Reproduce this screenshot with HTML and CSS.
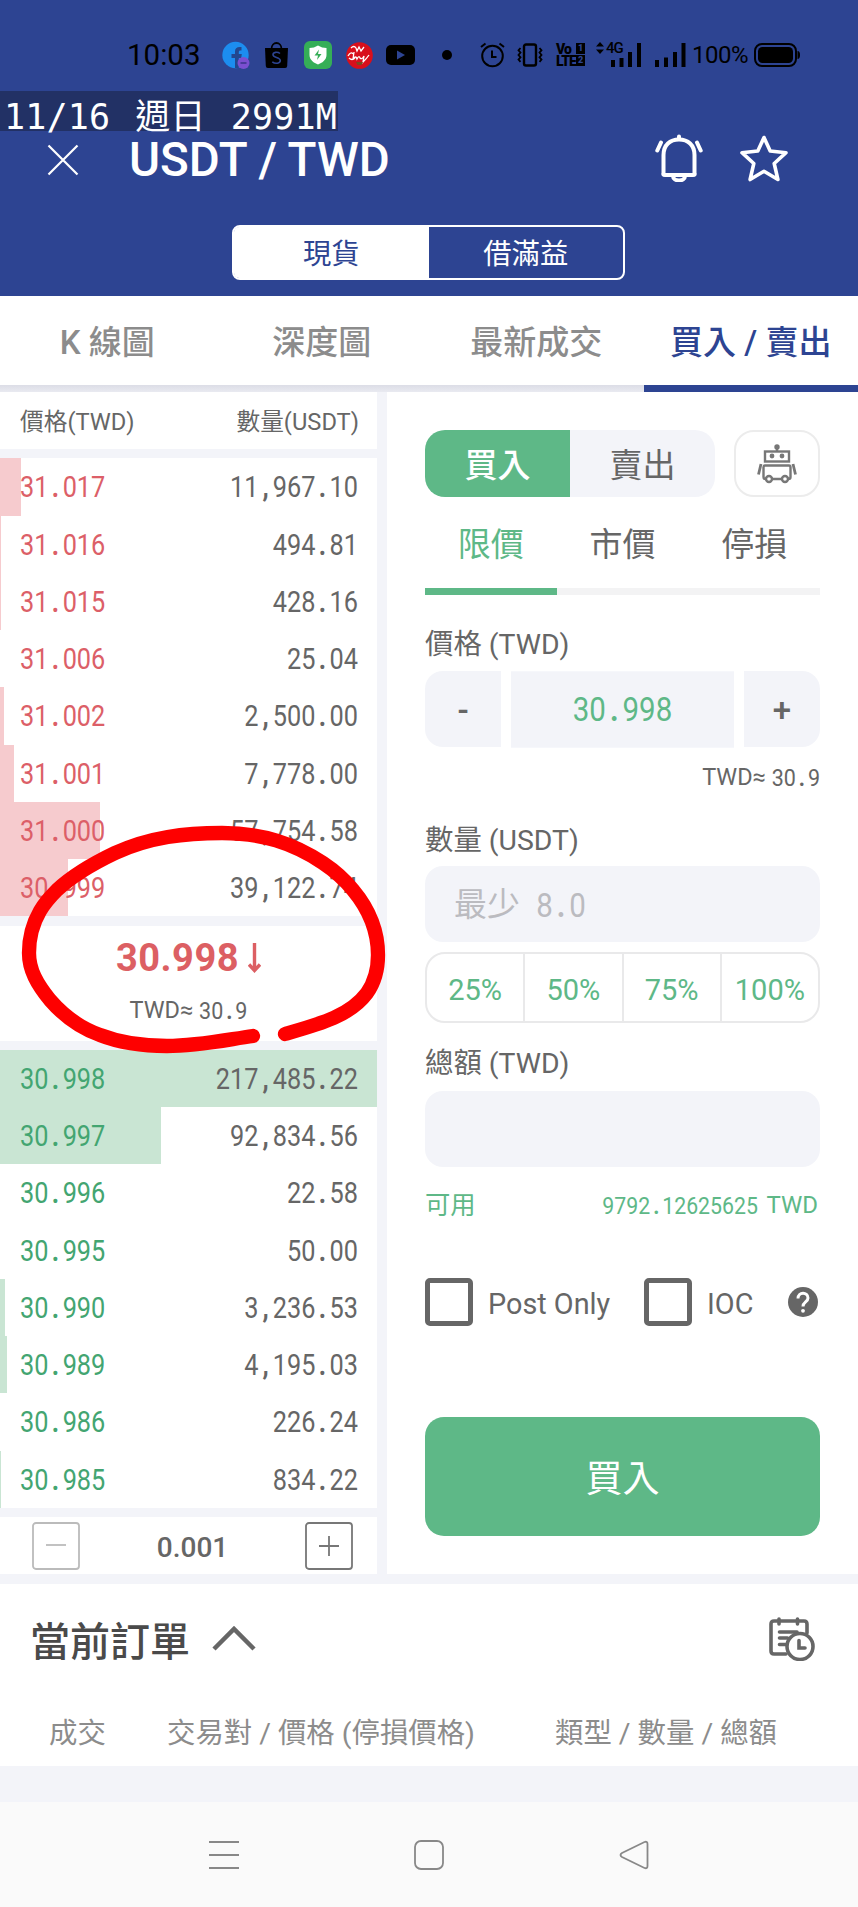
FILE: index.html
```html
<!DOCTYPE html>
<html lang="zh-Hant">
<head>
    <meta charset="UTF-8">
    <title>USDT / TWD</title>
    <link rel="stylesheet" href="styles.css">
</head>
<body>
    <div class="header">
        <div class="status-bar">
            <span class="clock">10:03</span>
            <svg class="ic-fb" width="28" height="29" viewBox="0 0 28 29">
                <circle cx="13.5" cy="14" r="13.2" fill="#1c8df0"/>
                <path d="M13 27V17H9.500v-4H13v-2.500C13 7 15 5.500 19.500 6v3.500c-2-.2-2.700.2-2.700 1.700V13h3l-.6 4h-2.400v10z" fill="#23478f"/>
                <circle cx="21.500" cy="22" r="6" fill="#7b4fd0"/>
                <path d="M18.500 22h6" stroke="#4a3a9c" stroke-width="2"/>
            </svg>
            <svg class="ic-bag" width="23" height="26" viewBox="0 0 23 26">
                <path d="M0 6h23l-.8 18q-.1 2-2 2H2.800q-1.900 0-2-2z" fill="#000"/>
                <path d="M6.500 7C6.500-1 16.500-1 16.500 7" fill="none" stroke="#000" stroke-width="1.800"/>
                <path d="M15 11.500c-2.500-2-7-1.500-7 1.300 0 3.200 7.300 2.200 7.300 5.700 0 3-5 3.700-8 1.300" fill="none" stroke="#2d4492" stroke-width="1.600"/>
            </svg>
            <svg class="ic-shield" width="28" height="28" viewBox="0 0 28 28">
                <rect width="28" height="28" rx="6" fill="#35ae57"/>
                <path d="M14 4.500q4 2.500 8.500 2.500v7c0 5-4.500 8-8.500 9.500C10 22 5.500 19 5.500 14V7Q10 7 14 4.500z" fill="#fff"/>
                <path d="M15 8.500l-4.500 6H14L13 19l4.500-6H14z" fill="#35ae57"/>
            </svg>
            <svg class="ic-red" width="27" height="27" viewBox="0 0 27 27">
                <circle cx="13.500" cy="13.500" r="13.300" fill="#d80f1c"/>
                <path d="M5 6q3-3 5 0l1 3 2-4 2 4 3-4M2 14q3-5 5-2M8 10l-1 7q3-4 4 0 2-4 3-1 2 2 4-2l-1 6q4-4 6-7M3 16q3 3 6 0" fill="none" stroke="#fff" stroke-width="1.300"/>
                <path d="M10 20h7l-1.500 3h-4z" fill="#7a4a1e"/>
            </svg>
            <svg class="ic-yt" width="29" height="20" viewBox="0 0 29 20">
                <rect width="29" height="20" rx="5" fill="#000"/>
                <path d="M11 5.500l8 4.500-8 4.500z" fill="#2d4492"/>
            </svg>
            <span class="dot"></span>
            <svg class="ic-alarm" width="25" height="26" viewBox="0 0 25 26">
                <circle cx="12.500" cy="14" r="10.300" fill="none" stroke="#000" stroke-width="2"/>
                <path d="M12 8.500V15h4.500M1 5l4.500-3.500M24 5l-4.500-3.500" fill="none" stroke="#000" stroke-width="2"/>
            </svg>
            <svg class="ic-vib" width="26" height="24" viewBox="0 0 26 24">
                <rect x="7" y="1.500" width="12" height="21" rx="2" fill="none" stroke="#000" stroke-width="2.400"/>
                <path d="M3.500 5l-2 2.300 2 2.300-2 2.400 2 2.300-2 2.300 2 2.300M22.500 5l2 2.300-2 2.300 2 2.400-2 2.300 2 2.300-2 2.300" fill="none" stroke="#000" stroke-width="1.800"/>
            </svg>
            <span class="volte"><span>Vo<b>1</b></span><span>LTE<b>2</b></span></span>
            <span class="net">
                <svg width="8" height="12" viewBox="0 0 8 12"><path d="M0 4.500L4 0l4 4.500zM0 7.500L4 12l4-4.500z" fill="#000"/></svg>
                <span>4G</span>
            </span>
            <svg class="ic-sig1" width="30" height="24" viewBox="0 0 30 24"><path d="M0 17h4v7H0zM8.500 15h4v9h-4zM17 9h4v15h-4zM26 0h4v24h-4z" fill="#000"/></svg>
            <svg class="ic-sig2" width="31" height="24" viewBox="0 0 31 24"><path d="M0 17h4v7H0zM9 14.500h4V24H9zM18 9h4v15h-4zM26.500 0h4v24h-4z" fill="#000"/></svg>
            <span class="percent">100%</span>
            <svg class="ic-bat" width="46" height="24" viewBox="0 0 46 24">
                <rect x="1" y="1" width="41" height="22" rx="7" fill="none" stroke="#000" stroke-width="2"/>
                <rect x="4" y="4" width="35" height="16" rx="4.500" fill="#000"/>
                <path d="M43.500 8q2.500 0 2.500 4t-2.500 4z" fill="#000"/>
            </svg>
        </div>
        <div class="memory-note">11/16 週日 2991M</div>
        <div class="title-row">
            <svg class="close" width="32" height="32" viewBox="0 0 32 32"><path d="M1.500 1.500l29 29M30.500 1.500l-29 29" stroke="#fff" stroke-width="2.200"/></svg>
            <h1>USDT / TWD</h1>
            <svg class="bell" width="48" height="48" viewBox="0 0 48 48" fill="none" stroke="#fff" stroke-width="4" stroke-linecap="round" stroke-linejoin="round">
                <path d="M8.500 39V21C8.500 11 15 5.500 24 5.500S39.500 11 39.500 21v18q1 2-1.500 2H10q-2.500 0-1.500-2z"/>
                <path d="M24 2.500v2M18 42c0 6 12 6 12 0" />
                <path d="M6 8.500L2.300 16.500M42 8.500l3.700 8"/>
            </svg>
            <svg class="star" width="50" height="48" viewBox="0 0 50 48" fill="none" stroke="#fff" stroke-width="3.600" stroke-linejoin="round">
                <path d="M25 3.500L31.200 17 47 18.700 35.200 29.500 38.900 45.500 25 37.200 11.100 45.500 14.800 29.500 3 18.700 18.800 17z"/>
            </svg>
        </div>
        <div class="segment">
            <span class="active">現貨</span>
            <span>借滿益</span>
        </div>
    </div>

    <div class="tabs">
        <span>K 線圖</span>
        <span>深度圖</span>
        <span>最新成交</span>
        <span class="active">買入 / 賣出</span>
    </div>

    <div class="main">
        <div class="book">
            <div class="book-head"><span>價格(TWD)</span><span>數量(USDT)</span></div>
            <div class="rows asks" id="asks"></div>
            <div class="last">
                <div class="last-price">30.998
                    <svg width="13" height="30" viewBox="0 0 13 30"><path d="M6.500 0v27M1 21.500l5.500 6 5.500-6" fill="none" stroke="#dc5f63" stroke-width="3.400"/></svg>
                </div>
                <div class="approx">TWD≈ <span class="num">30.9</span></div>
            </div>
            <div class="rows bids" id="bids"></div>
            <div class="step">
                <svg class="off" width="48" height="48" viewBox="0 0 48 48"><rect x="1" y="1" width="46" height="46" rx="3"/><path d="M14 23h20"/></svg>
                <span>0.001</span>
                <svg width="48" height="48" viewBox="0 0 48 48"><rect x="1" y="1" width="46" height="46" rx="3"/><path d="M14 24h20M24 14v20"/></svg>
            </div>
        </div>

        <div class="order-form">
            <div class="side-row">
                <span class="side buy">買入</span>
                <span class="side sell">賣出</span>
                <span class="bot">
                    <svg width="40" height="40" viewBox="0 0 40 40" fill="none" stroke="#777" stroke-width="2.400">
                        <circle cx="20" cy="3" r="1.500" fill="#777"/>
                        <path d="M20 4v4"/>
                        <rect x="8" y="7.500" width="24" height="10"/>
                        <circle cx="15" cy="12" r="1.200" fill="#777"/>
                        <circle cx="25" cy="12" r="1.200" fill="#777"/>
                        <path d="M8 21.500h24q1.500 0 1.500 2V33q0 2-2 2h-23q-2 0-2-2v-9.500q0-2 1.500-2z"/>
                        <circle cx="12" cy="35" r="3" fill="#fff"/>
                        <circle cx="28" cy="35" r="3" fill="#fff"/>
                        <path d="M4 20L1.500 30.500M36 20l2.500 10.500" stroke-width="2.800"/>
                    </svg>
                </span>
            </div>
            <div class="type-tabs">
                <span class="active">限價</span>
                <span>市價</span>
                <span>停損</span>
            </div>
            <div class="label label-price">價格 (TWD)</div>
            <div class="price-row">
                <span class="pm minus">-</span>
                <span class="price num">30.998</span>
                <span class="pm plus">+</span>
            </div>
            <div class="approx approx-right">TWD≈ <span class="num">30.9</span></div>
            <div class="label label-amount">數量 (USDT)</div>
            <div class="field">最少 <span class="num">8.0</span></div>
            <div class="percents"><span>25%</span><span>50%</span><span>75%</span><span>100%</span></div>
            <div class="label label-total">總額 (TWD)</div>
            <div class="field"></div>
            <div class="available"><span>可用</span><span class="balance"><span class="num">9792.12625625</span> TWD</span></div>
            <div class="checks">
                <span class="box"></span><span class="post-only">Post Only</span>
                <span class="box"></span><span class="ioc">IOC</span>
                <svg class="help" width="30" height="30" viewBox="0 0 30 30">
                    <circle cx="15" cy="15" r="15" fill="#666"/>
                    <path d="M10 11.500C10 4.500 20 4.500 20 11c0 4-5 4-5 8.500" fill="none" stroke="#fff" stroke-width="3"/>
                    <circle cx="15" cy="23.800" r="1.900" fill="#fff"/>
                </svg>
            </div>
            <div class="submit">買入</div>
        </div>

        <!-- hand drawn mark around the last price -->
        <svg class="mark" width="400" height="250" viewBox="0 815 400 250">
            <path d="M253 1036C225 1040 197 1046 167 1046C140 1046 118 1042 100 1035C80 1028 63 1015 50 1000C37 984 29 970 29 953C29 937 33 923 40 911C44 904 50 897 57 890C72 876 92 864 115 853C150 837 185 833 222 833C262 833 293 843 323 863C335 871 345 880 353 890C368 908 378 930 378 955C378 970 374 983 367 993C350 1016 320 1024 285 1034"/>
        </svg>
    </div>

    <div class="orders">
        <div class="orders-title">
            <h2>當前訂單</h2>
            <svg width="44" height="26" viewBox="0 0 44 26"><path d="M2 24L22 4l20 20" fill="none" stroke="#666" stroke-width="4.500"/></svg>
            <svg class="history" width="46" height="44" viewBox="0 0 46 44" fill="none" stroke="#666" stroke-width="3.600" stroke-linecap="round">
                <path d="M38 16V7q0-3-3-3H5Q2 4 2 7v27q0 3 3 3h12"/>
                <path d="M10 2v5M28.500 2v5M10.500 15H28M10.500 21h8M10.500 27.500h6"/>
                <circle cx="31" cy="29.500" r="13" fill="#fff"/>
                <path d="M30 23.500V31h6"/>
            </svg>
        </div>
        <div class="orders-head">
            <span>成交</span>
            <span>交易對 / 價格 (停損價格)</span>
            <span>類型 / 數量 / 總額</span>
        </div>
    </div>

    <div class="nav">
        <svg width="30" height="30" viewBox="0 0 30 30"><path d="M0 2h30M0 15h30M0 28h30"/></svg>
        <svg width="30" height="30" viewBox="0 0 30 30"><rect x="1" y="1" width="28" height="28" rx="6"/></svg>
        <svg width="30" height="30" viewBox="0 0 30 30"><path d="M25.500 2Q28.500 1 28.500 4v22q0 3-3 2L3 17q-3-2 0-4z"/></svg>
    </div>

    <script>
    // price, amount, depth bar width in px
    const asks = [
        ['31.017', '11,967.10', 21],
        ['31.016', '494.81', 1],
        ['31.015', '428.16', 1],
        ['31.006', '25.04', 0],
        ['31.002', '2,500.00', 4],
        ['31.001', '7,778.00', 14],
        ['31.000', '57,754.58', 100],
        ['30.999', '39,122.74', 68]
    ];
    const bids = [
        ['30.998', '217,485.22', 377],
        ['30.997', '92,834.56', 161],
        ['30.996', '22.58', 0],
        ['30.995', '50.00', 0],
        ['30.990', '3,236.53', 5],
        ['30.989', '4,195.03', 7],
        ['30.986', '226.24', 0],
        ['30.985', '834.22', 1]
    ];

    function renderRows(id, rows) {
        document.getElementById(id).innerHTML = rows.map(row => `<div class="row">
            <div class="bar" style="width: ${row[2]}px"></div>
            <span class="num row-price">${row[0]}</span><span class="num">${row[1]}</span>
        </div>`).join('');
    }
    renderRows('asks', asks);
    renderRows('bids', bids);

    // give dots and commas the same width as the digits
    document.querySelectorAll('.num').forEach(el => {
        el.innerHTML = el.textContent.replace(/[.,]/g, '<i>$&</i>');
    });
    </script>
</body>
</html>
```

FILE: styles.css
```css
* {
    box-sizing: border-box;
}
body {
    margin: 0;
    width: 858px;
    height: 1907px;
    overflow: hidden;
    background-color: #f3f4f9;
    color: #666;
    font-family: Roboto, "Noto Sans CJK TC", sans-serif;
}
svg {
    display: block;
    flex: none;
}
h1, h2 {
    margin: 0;
    font-weight: 500;
}

/* Header */
.header {
    position: relative;
    height: 296px;
    background-color: #2d4492;
}
.status-bar {
    display: flex;
    align-items: center;
    height: 91px;
    padding: 19px 0 0 127px;
    color: #000;
}
.clock {
    width: 95px;
    font-size: 29.500px;
}
.ic-bag { margin-left: 15px; }
.ic-shield { margin-left: 16px; }
.ic-red { margin-left: 14px; }
.ic-yt { margin-left: 13px; }
.dot {
    width: 10px;
    height: 10px;
    margin-left: 27px;
    border-radius: 50%;
    background-color: #000;
}
.ic-alarm { margin-left: 28px; }
.ic-vib { margin-left: 12px; }
.volte {
    display: flex;
    flex-direction: column;
    width: 29px;
    margin-left: 13px;
    font-size: 14px;
    font-weight: 900;
    line-height: 12px;
}
.volte span {
    display: flex;
    justify-content: space-between;
    letter-spacing: -1px;
}
.volte b {
    width: 9px;
    height: 11px;
    background-color: #000;
    color: #2d4492;
    font-size: 9px;
    line-height: 11px;
    text-align: center;
    letter-spacing: 0;
}
.net {
    display: flex;
    gap: 2px;
    width: 28px;
    height: 26px;
    margin-left: 11px;
    align-items: flex-start;
    font-size: 15px;
    font-weight: 500;
    line-height: 13px;
    letter-spacing: -1px;
}
.ic-sig1 { margin-left: -13px; }
.ic-sig2 { margin-left: 14px; }
.percent {
    width: 62px;
    margin-left: 6px;
    font-size: 24px;
    letter-spacing: -.5px;
}
.memory-note {
    position: absolute;
    left: 0;
    top: 91px;
    width: 338px;
    height: 54px;
    padding-left: 4px;
    background: linear-gradient(#223165, #223165) no-repeat 0 0 / 100% 40px;
    color: #fff;
    font-family: "DejaVu Sans Mono", "Noto Sans CJK TC", monospace;
    font-size: 35px;
    line-height: 53px;
    letter-spacing: .15px;
    word-spacing: 4px;
    white-space: pre;
}
.title-row {
    display: flex;
    align-items: center;
    height: 134px;
    padding: 3px 69px 0 47px;
}
.title-row h1 {
    margin: 1px 0 0 50px;
    color: #fff;
    font-size: 47.500px;
    line-height: 56px;
    white-space: nowrap;
}
.bell { margin: 0 0 3px auto; }
.star { margin: 0 0 3px 36px; }
.segment {
    display: flex;
    width: 393px;
    height: 55px;
    margin: 0 0 0 232px;
    border: 2px solid #fff;
    border-radius: 8px;
    color: #fff;
    font-size: 28.300px;
    line-height: 55px;
    text-align: center;
}
.segment span {
    flex: 1;
}
.segment .active {
    background-color: #fff;
    color: #2d4492;
    border-radius: 5px 0 0 5px;
}

/* Chart tabs */
.tabs {
    position: relative;
    display: flex;
    height: 96px;
    background: linear-gradient(#dcdde6, #e9eaf1) no-repeat 0 100% / 100% 7px #fff;
    color: #8c8c8c;
    font-size: 33px;
    font-weight: 500;
    line-height: 93px;
    text-align: center;
}
.tabs span {
    flex: 1;
    height: 96px;
    white-space: nowrap;
}
.tabs .active {
    border-bottom: 7px solid #2d4492;
    color: #2d4492;
}

.main {
    position: relative;
    display: flex;
    gap: 10px;
    height: 1182px;
}

/* Tabular numbers, taller than the normal face */
.num {
    display: inline-block;
    font-size: 25.3px;
    transform: scaleY(1.14);
}
.num i {
    display: inline-block;
    width: .5615em;
    font-style: normal;
    font-weight: 700;
    text-align: center;
}

/* Order book */
.book {
    display: flex;
    flex-direction: column;
    justify-content: space-between;
    width: 377px;
}
.book > div {
    background-color: #fff;
}
.book-head {
    display: flex;
    justify-content: space-between;
    height: 57px;
    padding: 0 18px 0 20px;
    font-size: 23.700px;
    line-height: 60px;
}
.row {
    position: relative;
    display: flex;
    justify-content: space-between;
    height: 57.250px;
    padding: 0 19px 0 20px;
    line-height: 59px;
}
.bar {
    position: absolute;
    left: 0;
    top: 0;
    height: 100%;
}
.asks .bar { background-color: #f6cbce; }
.bids .bar { background-color: #c9e5d3; }
.asks .row-price { color: #dc5f68; }
.bids .row-price { color: #43a571; }
.last {
    height: 115px;
    padding-top: 8px;
    text-align: center;
}
.last-price {
    display: flex;
    align-items: center;
    justify-content: center;
    gap: 9px;
    height: 48px;
    color: #dc5f63;
    font-size: 38px;
    font-weight: 700;
    letter-spacing: .5px;
}
.approx {
    font-size: 23.500px;
    line-height: 56px;
}
.approx .num {
    font-size: 21.500px;
}
.step {
    display: flex;
    align-items: center;
    justify-content: space-between;
    height: 57px;
    padding: 0 24px 0 32px;
    font-size: 28px;
    font-weight: 500;
}
.step span {
    padding-top: 3px;
}
.step svg {
    fill: none;
    stroke: #777;
    stroke-width: 1.800;
}
.step .off {
    stroke: #bbb;
}

/* Order form */
.order-form {
    width: 471px;
    padding: 38px 38px 0;
    background-color: #fff;
}
.side-row {
    display: flex;
    height: 67px;
    font-size: 33px;
    line-height: 71px;
    text-align: center;
}
.side {
    width: 145px;
}
.buy {
    border-radius: 20px 0 0 20px;
    background-color: #5eb887;
    color: #fff;
    font-weight: 500;
}
.sell {
    border-radius: 0 20px 20px 0;
    background-color: #f3f4f9;
}
.bot {
    display: flex;
    align-items: center;
    justify-content: center;
    width: 86px;
    margin-left: 19px;
    border: 2px solid #ececec;
    border-radius: 20px;
}
.type-tabs {
    display: flex;
    height: 98px;
    font-size: 33px;
    line-height: 96px;
    text-align: center;
}
.type-tabs span {
    flex: 1;
    border-bottom: 7px solid #f3f3f4;
}
.type-tabs .active {
    border-color: #5eb887;
    color: #5eb887;
}
.label {
    font-size: 28.400px;
}
.label-price {
    height: 76px;
    padding-top: 23px;
    line-height: 54px;
}
.price-row {
    display: flex;
    gap: 10px;
    height: 76px;
    line-height: 76px;
    text-align: center;
}
.pm {
    width: 76px;
    background-color: #f3f4f9;
    font-size: 33px;
    font-weight: 500;
    line-height: 80px;
}
.minus { border-radius: 18px 0 0 18px; }
.plus { border-radius: 0 18px 18px 0; }
.price-row .price {
    flex: 1;
    height: 67px;
    margin-top: 5px;
    background-color: #f3f4f9;
    color: #5eb887;
    font-size: 29.500px;
    line-height: 68px;
}
.approx-right {
    height: 60px;
    line-height: 60px;
    text-align: right;
}
.label-amount {
    height: 59px;
    padding-top: 7px;
    line-height: 53px;
}
.field {
    height: 76px;
    padding-left: 29px;
    border-radius: 18px;
    background-color: #f3f4f9;
    color: #bbbbc0;
    font-size: 33px;
    line-height: 77px;
    word-spacing: 8px;
}
.field .num {
    font-size: 29.500px;
}
.percents {
    display: flex;
    height: 71px;
    margin-top: 10px;
    border: 2px solid #e9e9ea;
    border-radius: 20px;
    color: #5eb887;
    font-size: 29px;
    line-height: 72px;
    text-align: center;
}
.percents span {
    flex: 1;
}
.percents span + span {
    border-left: 2px solid #e9e9ea;
}
.label-total {
    height: 68px;
    padding-top: 13px;
    line-height: 56px;
}
.available {
    display: flex;
    justify-content: space-between;
    height: 76px;
    padding-right: 2px;
    color: #5eb887;
    font-size: 25.300px;
    line-height: 77px;
}
.balance {
    font-size: 24px;
    line-height: 76px;
    word-spacing: 3px;
}
.balance .num {
    font-size: 21.300px;
}
.checks {
    display: flex;
    align-items: center;
    height: 48px;
    margin-top: 35px;
    font-size: 28.800px;
    white-space: nowrap;
}
.box {
    flex: none;
    width: 48px;
    height: 48px;
    border: 5px solid #666;
    border-radius: 5px;
}
.post-only {
    width: 156px;
    margin-left: 15px;
    padding-top: 4px;
}
.ioc {
    margin-left: 15px;
    padding-top: 4px;
}
.help {
    margin: 0 2px 0 auto;
}
.submit {
    height: 119px;
    margin-top: 91px;
    border-radius: 19px;
    background-color: #5eb887;
    color: #fff;
    font-size: 37px;
    line-height: 125px;
    text-align: center;
}
.mark {
    position: absolute;
    left: 0;
    top: 423px;
    fill: none;
    stroke: #fe0000;
    stroke-width: 14.300;
    stroke-linecap: round;
}

/* Current orders */
.orders {
    height: 182px;
    margin-top: 10px;
    background-color: #fff;
}
.orders-title {
    display: flex;
    align-items: center;
    height: 112px;
    padding: 0 43px 5px 30px;
}
.orders-title h2 {
    margin: 3px 22px 0 0;
    color: #4a4a4a;
    font-size: 40px;
}
.history {
    margin: 3px 0 0 auto;
}
.orders-head {
    display: flex;
    padding-left: 49px;
    color: #8c8c8c;
    font-size: 28.400px;
    line-height: 76px;
    white-space: nowrap;
}
.orders-head span:nth-child(1) { width: 118px; }
.orders-head span:nth-child(2) { width: 388px; }

/* System navigation */
.nav {
    display: flex;
    justify-content: center;
    gap: 175px;
    height: 105px;
    margin-top: 36px;
    padding-top: 38px;
    background-color: #fafafa;
}
.nav svg {
    fill: none;
    stroke: #888;
    stroke-width: 1.800;
}
```
